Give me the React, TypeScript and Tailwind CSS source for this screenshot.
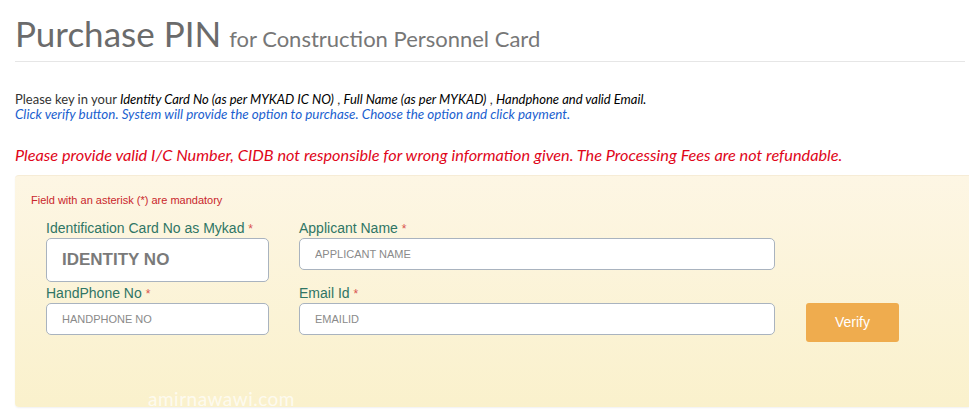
import React from 'react';

const Label = ({ children }: { children: React.ReactNode }) => (
  <label className="block text-[14px] leading-[18px] text-[#2f7565]">
    {children} <span className="text-[#d9534f] text-[12px]">*</span>
  </label>
);

const App = () => {
  return (
    <div className="w-[969px] h-[415px] bg-white overflow-hidden" style={{ fontFamily: 'Lato, "Open Sans", sans-serif' }}>
      <div className="pl-[15px] pt-[14px]">
        {/* Heading */}
        <h1 className="flex items-baseline gap-[8px] text-[#6b6b6b] pb-[9px] border-b border-[#e6e6e6] mr-[4px]">
          <span className="text-[35px] leading-[38px]">Purchase PIN</span>
          <span className="text-[22px] leading-[24px] text-[#777]">for Construction Personnel Card</span>
        </h1>

        {/* Instructions */}
        <div className="mt-[30px] text-[13px] leading-[15px]">
          <p className="text-[#333]">
            Please key in your <i className="text-black">Identity Card No (as per MYKAD IC NO)</i> ,{' '}
            <i className="text-black">Full Name (as per MYKAD)</i> , <i className="text-black">Handphone and valid Email.</i>
          </p>
          <p className="italic text-[#1b5fcf] text-[13.4px]">
            Click verify button. System will provide the option to purchase. Choose the option and click payment.
          </p>
        </div>

        <p className="mt-[23px] text-[16.3px] leading-[20px] italic text-[#e0061a]">
          Please provide valid I/C Number, CIDB not responsible for wrong information given. The Processing Fees are not refundable.
        </p>

        {/* Form panel */}
        <div className="relative mt-[10px] h-[232px] rounded-l-[4px] border-t border-[#f6ecd6] bg-gradient-to-b from-[#fdf6e4] to-[#faf1cc] shadow-[0_1px_2px_rgba(0,0,0,0.06)] pl-[16px] pt-[18px]">
          <p className="text-[11px] leading-[13px] text-[#c9262c]" style={{ fontFamily: '"Liberation Sans", Arial, sans-serif' }}>
            Field with an asterisk (*) are mandatory
          </p>

          <div className="mt-[12px] pl-[15px] flex gap-[30px]" style={{ fontFamily: '"Liberation Sans", Arial, sans-serif' }}>
            <div className="w-[223px] flex flex-col">
              <Label>Identification Card No as Mykad</Label>
              <input
                readOnly
                placeholder="IDENTITY NO"
                className="h-[44px] w-full rounded-[5px] border border-[#a9b3bf] bg-white px-[15px] text-[17px] font-bold placeholder:text-[#7a7a7a] outline-none"
              />
              <div className="mt-[2px]">
                <Label>HandPhone No</Label>
              </div>
              <input
                readOnly
                placeholder="HANDPHONE NO"
                className="h-[32px] w-full rounded-[5px] border border-[#a9b3bf] bg-white px-[15px] text-[11px] placeholder:text-[#8a8a8a] outline-none"
              />
            </div>

            <div className="w-[476px] flex flex-col">
              <Label>Applicant Name</Label>
              <input
                readOnly
                placeholder="APPLICANT NAME"
                className="h-[32px] w-full rounded-[5px] border border-[#a9b3bf] bg-white px-[15px] text-[11px] placeholder:text-[#8a8a8a] outline-none"
              />
              <div className="mt-[14px]">
                <Label>Email Id</Label>
              </div>
              <input
                readOnly
                placeholder="EMAILID"
                className="h-[32px] w-full rounded-[5px] border border-[#a9b3bf] bg-white px-[15px] text-[11px] placeholder:text-[#8a8a8a] outline-none"
              />
            </div>

            <div className="flex flex-col justify-end pl-[1px]">
              <button className="h-[39px] w-[93px] rounded-[3px] bg-[#efac4e] text-[14px] text-white mb-[-7px]">
                Verify
              </button>
            </div>
          </div>

          {/* watermark */}
          <span className="absolute left-[133px] bottom-[-6px] text-[19px] tracking-[0.5px] text-white/70">
            amirnawawi.com
          </span>
        </div>
      </div>
    </div>
  );
};

export default App;
